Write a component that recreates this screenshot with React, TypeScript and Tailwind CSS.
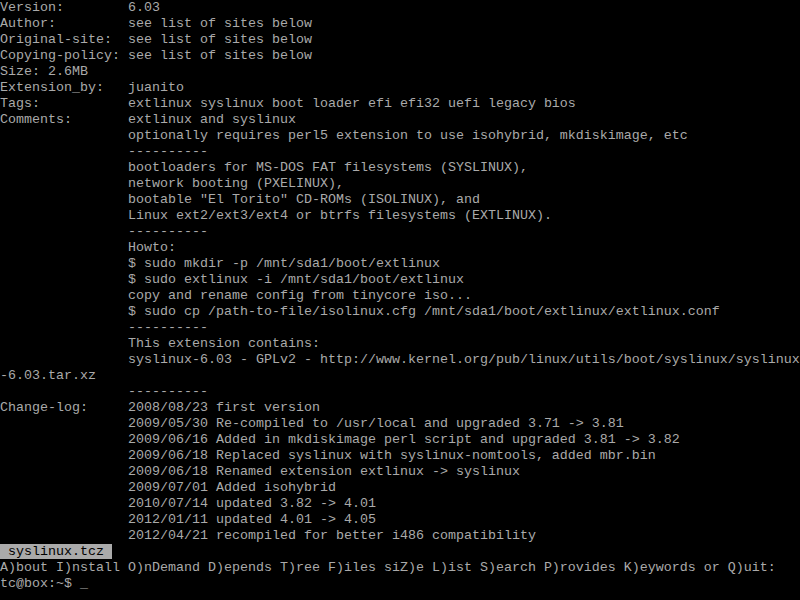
const lines: string[] = [
  "Version:        6.03",
  "Author:         see list of sites below",
  "Original-site:  see list of sites below",
  "Copying-policy: see list of sites below",
  "Size: 2.6MB",
  "Extension_by:   juanito",
  "Tags:           extlinux syslinux boot loader efi efi32 uefi legacy bios",
  "Comments:       extlinux and syslinux",
  "                optionally requires perl5 extension to use isohybrid, mkdiskimage, etc",
  "                ----------",
  "                bootloaders for MS-DOS FAT filesystems (SYSLINUX),",
  "                network booting (PXELINUX),",
  "                bootable \"El Torito\" CD-ROMs (ISOLINUX), and",
  "                Linux ext2/ext3/ext4 or btrfs filesystems (EXTLINUX).",
  "                ----------",
  "                Howto:",
  "                $ sudo mkdir -p /mnt/sda1/boot/extlinux",
  "                $ sudo extlinux -i /mnt/sda1/boot/extlinux",
  "                copy and rename config from tinycore iso...",
  "                $ sudo cp /path-to-file/isolinux.cfg /mnt/sda1/boot/extlinux/extlinux.conf",
  "                ----------",
  "                This extension contains:",
  "                syslinux-6.03 - GPLv2 - http://www.kernel.org/pub/linux/utils/boot/syslinux/syslinux",
  "-6.03.tar.xz",
  "                ----------",
  "Change-log:     2008/08/23 first version",
  "                2009/05/30 Re-compiled to /usr/local and upgraded 3.71 -> 3.81",
  "                2009/06/16 Added in mkdiskimage perl script and upgraded 3.81 -> 3.82",
  "                2009/06/18 Replaced syslinux with syslinux-nomtools, added mbr.bin",
  "                2009/06/18 Renamed extension extlinux -> syslinux",
  "                2009/07/01 Added isohybrid",
  "                2010/07/14 updated 3.82 -> 4.01",
  "                2012/01/11 updated 4.01 -> 4.05",
  "                2012/04/21 recompiled for better i486 compatibility",
]

export default function App() {
  return (
    <div
      className="w-[800px] h-[600px] overflow-hidden bg-black text-[#aaaaaa] text-[13.333px] leading-4 whitespace-pre"
      style={{ fontFamily: '"Liberation Mono", "DejaVu Sans Mono", monospace' }}
    >
      {lines.map((line, i) => (
        <div key={i} className="h-4">
          {line}
        </div>
      ))}
      <div className="h-4">
        <span className="bg-[#aaaaaa] text-black"> syslinux.tcz </span>
      </div>
      <div className="h-4">A)bout I)nstall O)nDemand D)epends T)ree F)iles siZ)e L)ist S)earch P)rovides K)eywords or Q)uit:</div>
      <div className="h-4">tc@box:~$ _</div>
    </div>
  )
}
